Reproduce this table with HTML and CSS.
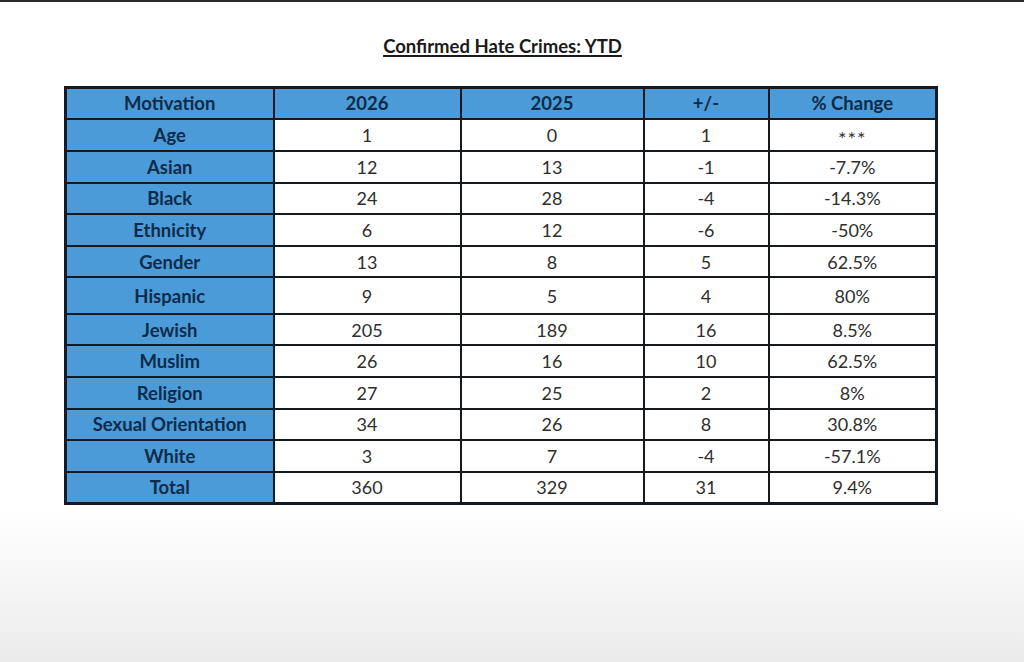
FILE: index.html
```html
<!DOCTYPE html>
<html lang="en">
<head>
<meta charset="utf-8">
<title>Confirmed Hate Crimes: YTD</title>
<link rel="stylesheet" href="styles.css">
</head>
<body>
<div class="screen">
  <div class="report">
    <h1 class="title">Confirmed Hate Crimes: YTD</h1>
    <table class="stats">
      <colgroup>
        <col class="c-mot"><col class="c-y1"><col class="c-y2"><col class="c-diff"><col class="c-pct">
      </colgroup>
      <thead>
        <tr class="head-row">
          <th>Motivation</th><th>2026</th><th>2025</th><th>+/-</th><th>% Change</th>
        </tr>
      </thead>
      <tbody>
        <tr><th>Age</th><td>1</td><td>0</td><td>1</td><td class="stars">***</td></tr>
        <tr><th>Asian</th><td>12</td><td>13</td><td>-1</td><td>-7.7%</td></tr>
        <tr><th>Black</th><td>24</td><td>28</td><td>-4</td><td>-14.3%</td></tr>
        <tr><th>Ethnicity</th><td>6</td><td>12</td><td>-6</td><td>-50%</td></tr>
        <tr><th>Gender</th><td>13</td><td>8</td><td>5</td><td>62.5%</td></tr>
        <tr class="tall"><th>Hispanic</th><td>9</td><td>5</td><td>4</td><td>80%</td></tr>
        <tr><th>Jewish</th><td>205</td><td>189</td><td>16</td><td>8.5%</td></tr>
        <tr><th>Muslim</th><td>26</td><td>16</td><td>10</td><td>62.5%</td></tr>
        <tr><th>Religion</th><td>27</td><td>25</td><td>2</td><td>8%</td></tr>
        <tr><th>Sexual Orientation</th><td>34</td><td>26</td><td>8</td><td>30.8%</td></tr>
        <tr><th>White</th><td>3</td><td>7</td><td>-4</td><td>-57.1%</td></tr>
        <tr><th>Total</th><td>360</td><td>329</td><td>31</td><td>9.4%</td></tr>
      </tbody>
    </table>
  </div>
</div>
</body>
</html>
```

FILE: styles.css
```css
html, body {
  margin: 0;
  padding: 0;
}

body {
  width: 1024px;
  height: 662px;
  overflow: hidden;
  font-family: Lato, "Open Sans", "Liberation Sans", sans-serif;
  background: linear-gradient(to bottom, #ffffff 0, #ffffff 512px, #f6f6f6 580px, #ebebeb 662px);
}

.screen {
  height: 660px;
  border-top: 2px solid #2b2b2b;
}

.report {
  width: 871px;
  padding-left: 64px;
  padding-top: 34px;
}

.title {
  margin: 0 0 29.5px 0;
  text-align: center;
  font-size: 18.5px;
  line-height: 20px;
  font-weight: 700;
  color: #1a1a1a;
  text-decoration: underline;
  text-decoration-thickness: 1.5px;
  text-underline-offset: 2px;
  padding-left: 6px;
}

.stats {
  width: 871px;
  border-collapse: collapse;
  table-layout: fixed;
  border: 3px solid #141a22;
  font-size: 18px;
}

.c-mot { width: 208px; }
.c-y1 { width: 187px; }
.c-y2 { width: 183px; }
.c-diff { width: 125px; }
.c-pct { width: 168px; }

.stats th,
.stats td {
  border: 2px solid #16191d;
  padding: 0;
  text-align: center;
  vertical-align: middle;
  line-height: 20px;
}

.stats tr {
  height: 31.6px;
}

.stats .head-row {
  height: 32.4px;
}

.stats .tall {
  height: 36.5px;
}

.stats th {
  background: #4a9bd7;
  color: #0e2b4b;
  font-weight: 700;
  font-size: 18.5px;
}

.stats td {
  background: #ffffff;
  color: #2e2e2e;
  font-weight: 400;
}

.stats .stars {
  font-size: 20px;
  letter-spacing: 1px;
  color: #333333;
  padding-top: 5px;
}
```
